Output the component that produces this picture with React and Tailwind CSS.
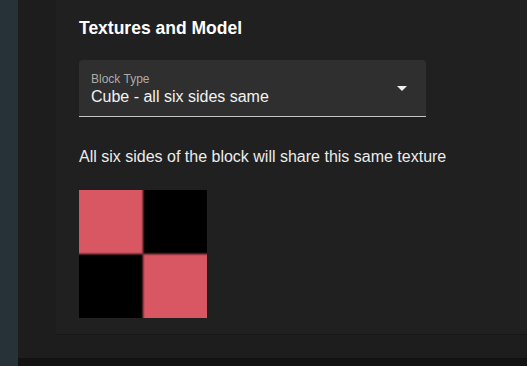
import React from 'react'

const Texture = () => (
  <svg width="128" height="128" viewBox="0 0 128 128" className="block">
    <defs>
      <filter id="soft" x="-10%" y="-10%" width="120%" height="120%">
        <feGaussianBlur stdDeviation="1.3" />
      </filter>
      <clipPath id="box">
        <rect x="0" y="0" width="128" height="128" />
      </clipPath>
    </defs>
    <g clipPath="url(#box)">
      <rect x="0" y="0" width="128" height="128" fill="#000" />
      <g filter="url(#soft)">
        <rect x="-12" y="-12" width="76" height="76" fill="#d95763" />
        <rect x="64" y="64" width="76" height="76" fill="#d95763" />
      </g>
    </g>
  </svg>
)

const App = () => {
  return (
    <div
      className="flex h-[366px] w-[527px] overflow-hidden bg-[#1e1e1e]"
      style={{ fontFamily: '"Liberation Sans", Arial, sans-serif' }}
    >
      <div className="w-[18px] shrink-0 bg-[#263238]" />
      <div className="flex flex-1 flex-col">
        <div className="flex h-[358px] flex-col bg-[#1d1d1d] pl-[38px]">
          <section className="h-[335px] border-b border-[#191919] bg-[#202020] pl-[23px] pt-[16px]">
            <h2 className="text-[17.5px] font-bold leading-[24px] text-white">Textures and Model</h2>

            <div className="mt-[20px] flex h-[57px] w-[347px] items-center justify-between rounded-t-[4px] border-b border-[#c4c4c4] bg-[#2f2f2f]">
              <div className="self-start pl-[12px] pt-[11px]">
                <p className="text-[12px] leading-[16px] text-[#ababab]">Block Type</p>
                <p className="text-[16px] leading-[20px] text-[#f2f2f2]">Cube - all six sides same</p>
              </div>
              <svg width="10" height="5" viewBox="0 0 10 5" className="mr-[19px] mt-[1px]">
                <path d="M0 0 L10 0 L5 5 Z" fill="#f0f0f0" />
              </svg>
            </div>

            <p className="mt-[28px] text-[16px] leading-[24px] text-[#ececec]">
              All six sides of the block will share this same texture
            </p>

            <div className="mt-[21px]">
              <Texture />
            </div>
          </section>
        </div>
        <div className="flex-1 bg-[#121212]" />
      </div>
    </div>
  )
}

export default App
